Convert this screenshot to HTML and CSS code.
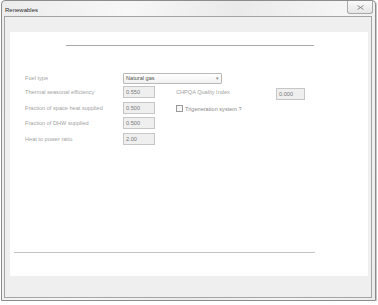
FILE: index.html
```html
<!DOCTYPE html>
<html lang="en">
<head>
    <meta charset="UTF-8">
    <title>Renewables</title>
    <link rel="stylesheet" href="styles.css">
</head>
<body>
    <div class="window">
        <div class="titlebar">
            <span class="title">Renewables</span>
            <div class="close-btn">
                <svg width="7" height="5" viewBox="0 0 7 5">
                    <path d="M0.5 0.5 L6.5 4.5 M6.5 0.5 L0.5 4.5" stroke="#8a8a8a" stroke-width="1" fill="none"/>
                </svg>
            </div>
        </div>

        <div class="frame">
            <div class="panel">
                <div class="rule-top"></div>

                <!-- Main form -->
                <div class="form-grid">
                    <label class="lbl first">Fuel type</label>
                    <div class="select">
                        <span>Natural gas</span>
                        <span class="arrow">&#9662;</span>
                    </div>

                    <label class="lbl first">Thermal seasonal efficiency</label>
                    <div class="field">0.550</div>
                    <label class="lbl">CHPQA Quality Index</label>
                    <div class="field field-right">0.000</div>

                    <label class="lbl first">Fraction of space heat supplied</label>
                    <div class="field">0.500</div>
                    <div class="check-row">
                        <span class="checkbox"></span>
                        <span class="lbl">Trigeneration system ?</span>
                    </div>

                    <label class="lbl first">Fraction of DHW supplied</label>
                    <div class="field">0.500</div>

                    <label class="lbl first">Heat to power ratio</label>
                    <div class="field">2.00</div>
                </div>

                <div class="rule-bottom"></div>
            </div>
        </div>
    </div>
</body>
</html>
```

FILE: styles.css
```css
body {
    margin: 0;
    padding: 0;
    background-color: #ffffff;
    font-family: "Liberation Sans", Arial, sans-serif;
}
.window {
    box-sizing: border-box;
    width: 375px;
    height: 301px;
    margin-left: 1px;
    border: 1px solid #8c8c8c;
    border-radius: 4px 4px 0 0;
    background: linear-gradient(100deg, #ececec 0%, #f7f7f7 30%, #eaeaea 55%, #f5f5f5 80%, #ececec 100%);
    box-shadow: 1px 1px 0 #c8c8c8;
    display: flex;
    flex-direction: column;
}
.titlebar {
    height: 15px;
    display: flex;
    align-items: flex-start;
    justify-content: space-between;
}
.title {
    font-size: 6px;
    color: #2a2a2a;
    margin: 6px 0 0 3px;
}
.close-btn {
    width: 24px;
    height: 12px;
    margin-right: 2px;
    border: 1px solid #a8a8a8;
    border-top: none;
    border-radius: 0 0 3px 3px;
    background: linear-gradient(#fafafa, #e6e6e6);
    display: flex;
    align-items: center;
    justify-content: center;
}
.frame {
    flex: 1;
    margin: 0 3px 2px 2px;
    border: 1px solid #a4a4a4;
    background-color: #efefef;
    padding: 15px 3px 21px 5px;
    display: flex;
}
.panel {
    flex: 1;
    background-color: #ffffff;
    padding-top: 13px;
    display: flex;
    flex-direction: column;
}
.rule-top {
    margin-left: 56px;
    width: 248px;
    height: 1px;
    background-color: #a9a9a9;
}
.form-grid {
    margin: 27px 0 0 15px;
    display: grid;
    grid-template-columns: 98px 53px 100px auto;
    grid-auto-rows: 12px;
    grid-template-rows: 10px;
    row-gap: 3.4px;
    align-items: center;
}
.lbl {
    font-size: 5.6px;
    color: #a3a3a3;
    white-space: nowrap;
}
.lbl.first {
    grid-column: 1;
}
.select {
    grid-column: 2 / 5;
    box-sizing: border-box;
    width: 99px;
    height: 11px;
    border: 1px solid #b9b9b9;
    border-radius: 1px;
    background: linear-gradient(#ffffff, #f1f1f1);
    display: flex;
    align-items: center;
    justify-content: space-between;
    padding: 0 2px;
    font-size: 5.6px;
    color: #555555;
}
.select .arrow {
    font-size: 5px;
    color: #8a8a8a;
}
.field {
    box-sizing: border-box;
    width: 32px;
    height: 12px;
    border: 1px solid #c6c6c6;
    background-color: #efefef;
    font-size: 5.6px;
    color: #7a7a7a;
    padding-left: 2px;
    display: flex;
    align-items: center;
}
.field-right {
    width: 29px;
    margin-top: 4px;
}
.check-row {
    grid-column: 3 / 5;
    display: flex;
    align-items: center;
    gap: 2px;
    margin-top: 2px;
}
.check-row .lbl {
    color: #8a8a8a;
}
.checkbox {
    box-sizing: border-box;
    width: 7px;
    height: 7px;
    border: 1px solid #9a9a9a;
    background-color: #f6f6f6;
}
.rule-bottom {
    margin: auto 0 23px 4px;
    width: 301px;
    height: 1px;
    background-color: #c4c4c4;
}
```
